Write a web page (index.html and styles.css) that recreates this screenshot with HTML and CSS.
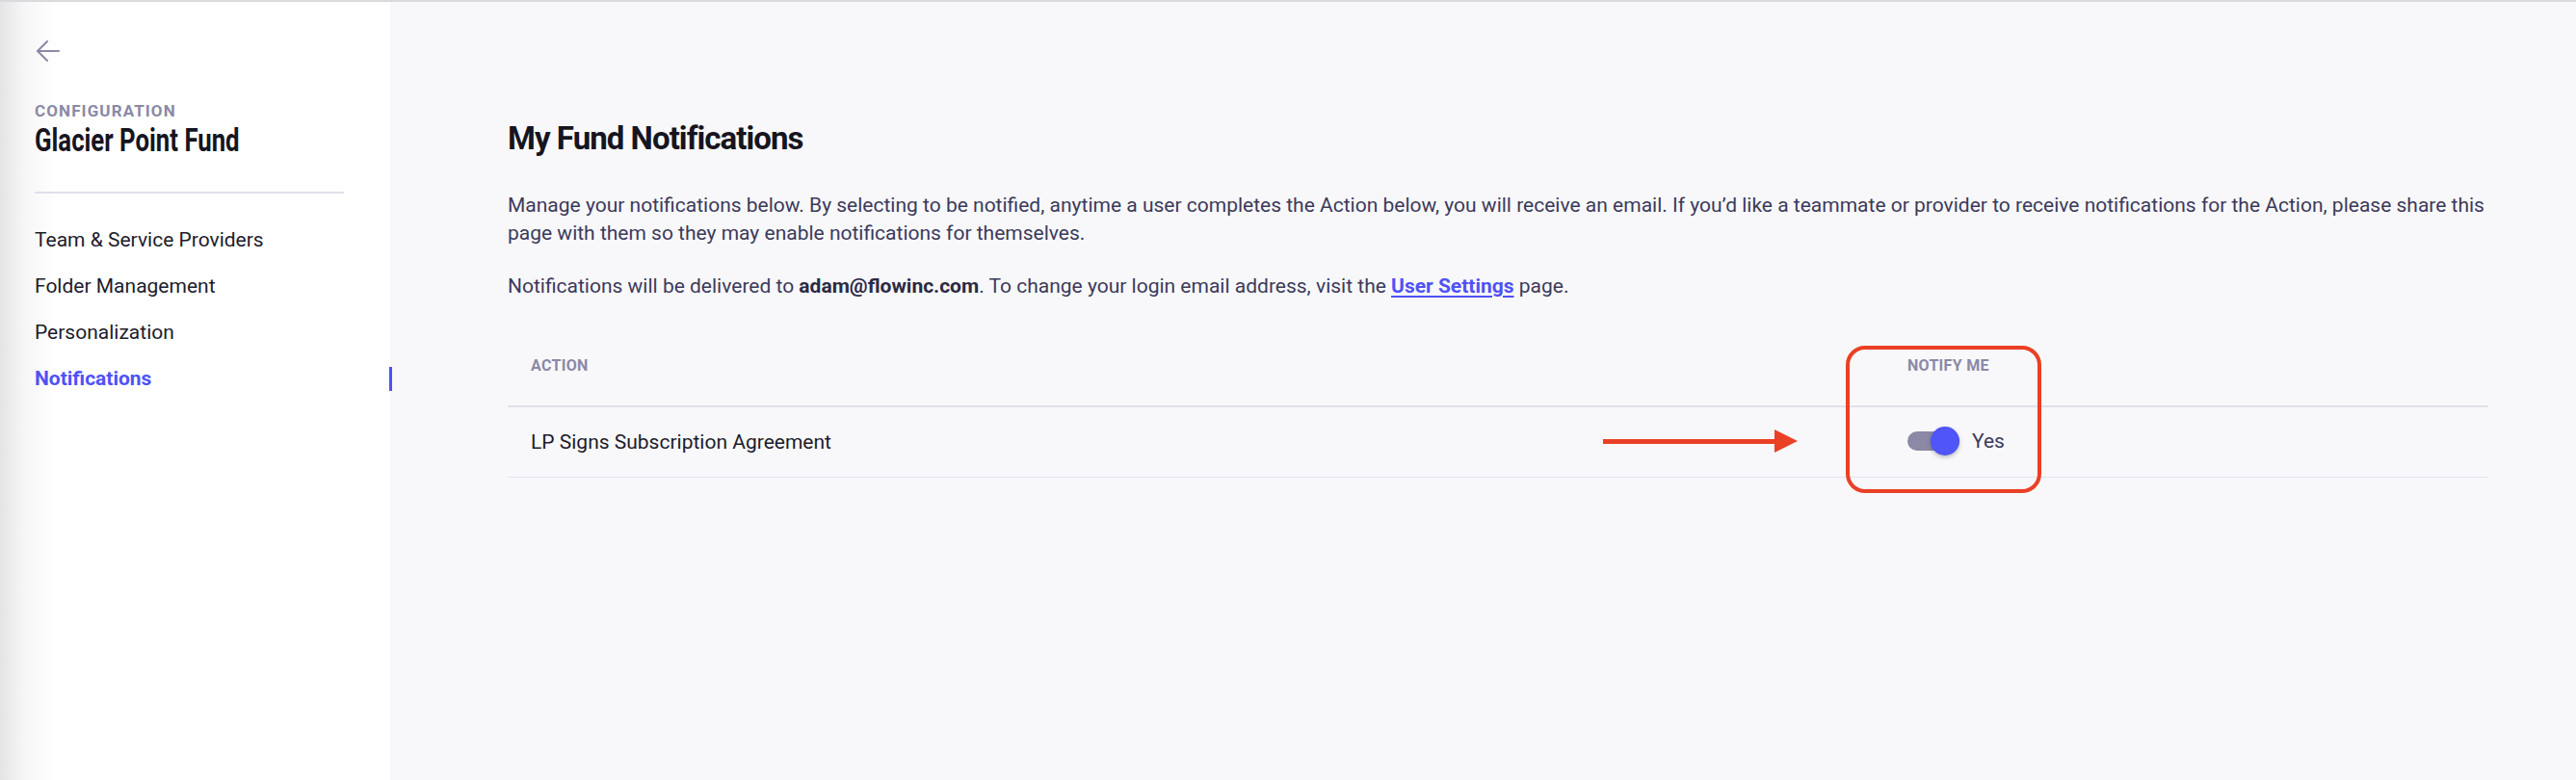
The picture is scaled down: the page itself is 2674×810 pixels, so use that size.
FILE: index.html
```html
<!DOCTYPE html>
<html lang="en">
<head>
    <meta charset="UTF-8">
    <meta name="viewport" content="width=device-width, initial-scale=1.0">
    <title>Notifications - Glacier Point Fund</title>
    <link rel="stylesheet" href="styles.css">
</head>
<body>
    <div class="layout">
        <aside class="sidebar">
            <a class="back-link" href="#" aria-label="Back">
                <svg width="24" height="24" viewBox="0 0 24 24" fill="none" stroke="#8b89a6" stroke-width="2" stroke-linecap="round" stroke-linejoin="round">
                    <path d="M1 12H23"/>
                    <path d="M11 2L1 12L11 22"/>
                </svg>
            </a>
            <div class="config-label">CONFIGURATION</div>
            <div class="fund-name"><span>Glacier Point Fund</span></div>
            <hr class="side-divider">
            <ul class="side-nav">
                <li class="side-item">Team &amp; Service Providers</li>
                <li class="side-item">Folder Management</li>
                <li class="side-item">Personalization</li>
                <li class="side-item active">Notifications</li>
            </ul>
        </aside>

        <main class="content">
            <h1 class="page-title">My Fund Notifications</h1>
            <p class="intro">Manage your notifications below. By selecting to be notified, anytime a user completes the Action below, you will receive an email. If you’d like a teammate or provider to receive notifications for the Action, please share this page with them so they may enable notifications for themselves.</p>
            <p class="intro second">Notifications will be delivered to <strong>adam@flowinc.com</strong>. To change your login email address, visit the <a href="#" class="settings-link">User Settings</a> page.</p>

            <div class="notif-table">
                <div class="table-head">
                    <div class="th">ACTION</div>
                    <div class="th">NOTIFY ME</div>
                </div>
                <div class="table-row">
                    <div class="td">LP Signs Subscription Agreement</div>
                    <div class="td">
                        <label class="toggle">
                            <span class="track"><span class="knob"></span></span>
                            <span class="toggle-text">Yes</span>
                        </label>
                    </div>
                </div>

                <!-- annotation overlay -->
                <div class="annot-arrow">
                    <span class="arrow-line"></span>
                    <span class="arrow-head"></span>
                </div>
                <div class="annot-box"></div>
            </div>
        </main>
    </div>
</body>
</html>
```

FILE: styles.css
```css
* { box-sizing: border-box; }
html, body { margin: 0; padding: 0; }
body { font-family: Roboto, "Liberation Sans", Arial, sans-serif; background: #f8f8fa; border-top: 2px solid #d9d9de; height: 810px; overflow: hidden; color: #1d1c2b; }

.layout { display: flex; height: 808px; }

.sidebar { width: 405px; flex-shrink: 0; background: linear-gradient(90deg, #e4e4e6 0, #f6f6f7 25px, #ffffff 60px); padding: 39px 48px 0 36px; position: relative; }
.back-link { display: block; width: 24px; height: 24px; margin-left: 2px; }
.back-link svg { display: block; }
.config-label { margin-top: 40px; font-size: 17px; line-height: 20px; font-weight: 700; letter-spacing: 1.1px; color: #8b89a6; }
.fund-name { margin-top: 2px; font-size: 33px; line-height: 38px; font-weight: 700; color: #16151f; white-space: nowrap; }
.fund-name span { display: inline-block; transform: scaleX(0.78); transform-origin: left center; }
.side-divider { border: none; height: 2px; background: #e1e0ea; margin: 34px 0 24px 0; }
.side-nav { list-style: none; margin: 0; padding: 0; }
.side-item { font-size: 21px; line-height: 48px; color: #1d1c2b; position: relative; }
.side-item.active { color: #4f52f5; font-weight: 700; }
.side-item.active::after { content: ""; position: absolute; right: -50px; top: 12px; width: 3px; height: 25px; background: #4f52f5; }

.content { flex: 1; padding: 122px 91px 0 122px; }
.page-title { margin: 0; font-size: 33px; line-height: 40px; font-weight: 700; letter-spacing: -0.95px; color: #16151f; }
.intro { margin: 35px 0 0 0; font-size: 21px; line-height: 29.4px; color: #3c3a5a; }
.intro.second { margin-top: 25px; }
.intro strong { color: #2b2a45; font-weight: 700; }
.settings-link { color: #4f52f5; font-weight: 700; text-decoration: underline; text-underline-offset: 3px; }

.notif-table { margin-top: 28px; position: relative; }
.table-head, .table-row { display: grid; grid-template-columns: 1429px 1fr; }
.table-head { border-bottom: 2px solid #e1e0ea; }
.th { padding: 30px 24px 31px 24px; font-size: 16px; line-height: 20px; font-weight: 700; letter-spacing: 0.3px; color: #8b89a6; }
.table-row { height: 73px; border-bottom: 1px solid #e4e3ec; align-items: center; }
.td { padding: 0 24px; font-size: 21px; color: #1d1c2b; }

.toggle { display: inline-flex; align-items: center; gap: 13px; cursor: pointer; }
.track { display: block; position: relative; width: 54px; height: 20px; border-radius: 10px; background: #8b89a6; }
.knob { position: absolute; right: 0; top: -5px; width: 30px; height: 30px; border-radius: 50%; background: #4f55f6; box-shadow: 0 2px 4px rgba(0, 0, 0, 0.25); }
.toggle-text { font-size: 21px; color: #3c3a5a; }

.annot-arrow { position: absolute; left: 1137px; top: 106px; width: 202px; height: 24px; display: flex; align-items: center; }
.arrow-line { flex: 1; height: 5px; background: #ea4025; }
.arrow-head { width: 0; height: 0; border-top: 12px solid transparent; border-bottom: 12px solid transparent; border-left: 24px solid #ea4025; }
.annot-box { position: absolute; left: 1389px; top: 19px; width: 203px; height: 153px; border: 4px solid #ea4025; border-radius: 20px; }
```
